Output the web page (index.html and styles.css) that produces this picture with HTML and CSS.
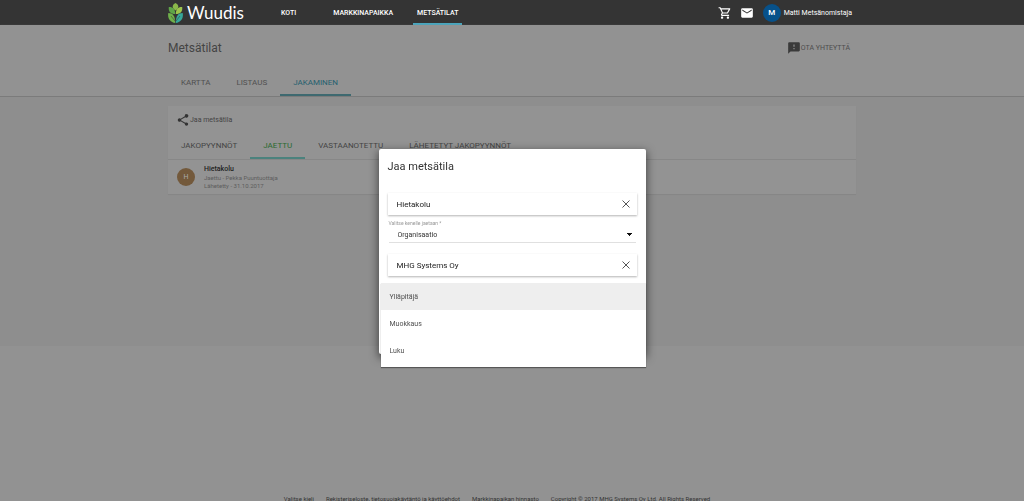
FILE: index.html
```html
<!DOCTYPE html>
<html lang="fi">
<head>
<meta charset="utf-8">
<meta name="viewport" content="width=device-width, initial-scale=1">
<title>Wuudis – Metsätilat</title>
<link rel="stylesheet" href="styles.css">
</head>
<body>
<div class="page">
  <header class="topbar">
    <div class="container topbar-row">
      <a class="brand" href="#">
        <svg class="brand-mark" viewBox="0 0 15 20" aria-hidden="true">
          <path d="M7.500 0C11 1.800 11.500 4.800 7.500 7.500C3.500 4.800 4 1.800 7.500 0Z" fill="#8bb84a"/>
          <path d="M.8 4C5 3.800 7.200 6 7.200 11C2.500 11 .2 8.500 .8 4Z" fill="#5fa548"/>
          <path d="M14.200 4C10 3.800 7.800 6 7.800 11C12.500 11 14.800 8.500 14.200 4Z" fill="#9dc54d"/>
          <path d="M.3 10C5 10 7.200 13 7.200 20C2 19.500-.7 15 .3 10Z" fill="#6fb04a"/>
          <path d="M14.700 10C10 10 7.800 13 7.800 20C13 19.500 15.700 15 14.700 10Z" fill="#36a79a"/>
          <path d="M3 13L7 18M12 13L8 18" stroke="#343434" stroke-width=".5" fill="none"/>
        </svg>
        <span>Wuudis</span>
      </a>
      <nav class="main-nav">
        <a href="#">KOTI</a>
        <a href="#">MARKKINAPAIKKA</a>
        <a class="current" href="#">METSÄTILAT</a>
      </nav>
      <div class="account">
        <button class="icon-button" aria-label="Ostoskori"><svg viewBox="0 0 24 24"><path d="M15.550 13c.75 0 1.410-.41 1.750-1.030l3.580-6.490A.996.996 0 0 0 20.010 4H5.210l-.94-2H1v2h2l3.600 7.590-1.350 2.440C4.520 15.370 5.480 17 7 17h12v-2H7l1.100-2h7.450zM6.160 6h12.150l-2.760 5H8.530L6.160 6zM7 18c-1.100 0-1.990.9-1.990 2S5.900 22 7 22s2-.9 2-2-.9-2-2-2zm10 0c-1.100 0-1.990.9-1.990 2s.89 2 1.990 2 2-.9 2-2-.9-2-2-2z"/></svg></button>
        <button class="icon-button mail" aria-label="Viestit"><svg viewBox="0 0 24 24"><path d="M20 4H4a2 2 0 0 0-2 2v12a2 2 0 0 0 2 2h16a2 2 0 0 0 2-2V6a2 2 0 0 0-2-2zm0 4l-8 5-8-5V6l8 5 8-5v2z"/></svg></button>
        <button class="user"><span class="avatar">M</span>Matti Metsänomistaja</button>
      </div>
    </div>
  </header>

  <div class="subheader">
    <div class="container">
      <div class="title-row">
        <h1>Metsätilat</h1>
        <button class="contact"><svg viewBox="0 0 24 24"><path d="M20 2H4c-1.100 0-1.990.9-1.990 2L2 22l4-4h14c1.100 0 2-.9 2-2V4c0-1.100-.9-2-2-2zm-7 12h-2v-2h2v2zm0-4h-2V6h2v4z"/></svg>OTA YHTEYTTÄ</button>
      </div>
      <nav class="tabs">
        <a href="#">KARTTA</a>
        <a href="#">LISTAUS</a>
        <a class="current" href="#">JAKAMINEN</a>
      </nav>
    </div>
  </div>

  <main class="content">
    <section class="container card">
      <button class="share"><svg viewBox="0 0 24 24"><path d="M18 16.080c-.76 0-1.440.3-1.960.77L8.910 12.700c.05-.23.09-.46.09-.7s-.04-.47-.09-.7l7.050-4.110A2.990 2.990 0 1 0 15 5c0 .24.04.47.09.7L8.040 9.810A2.990 2.990 0 1 0 8.040 14.190l7.120 4.160c-.05.21-.08.43-.08.65a2.920 2.920 0 1 0 2.920-2.920z"/></svg>Jaa metsätila</button>
      <nav class="tabs card-tabs">
        <a href="#">JAKOPYYNNÖT</a>
        <a class="current" href="#">JAETTU</a>
        <a href="#">VASTAANOTETTU</a>
        <a href="#">LÄHETETYT JAKOPYYNNÖT</a>
      </nav>
      <article class="share-item">
        <span class="item-avatar">H</span>
        <div>
          <h2>Hietakolu</h2>
          <p>Jaettu - Pekka Puuntuottaja</p>
          <p>Lähetetty - 31.10.2017</p>
        </div>
      </article>
    </section>
  </main>

  <footer class="footer">
    <a href="#">Valitse kieli</a>
    <a href="#">Rekisteriseloste, tietosuojakäytäntö ja käyttöehdot</a>
    <a href="#">Markkinapaikan hinnasto</a>
    <span>Copyright © 2017 MHG Systems Oy Ltd. All Rights Reserved</span>
  </footer>
</div>

<div class="overlay">
  <form class="dialog" role="dialog" aria-labelledby="dialog-title">
    <h2 id="dialog-title">Jaa metsätila</h2>
    <div class="search-box">
      <input type="text" value="Hietakolu" aria-label="Metsätila">
      <button type="button" aria-label="Tyhjennä metsätila"><svg viewBox="0 0 10 10"><path d="M1.500 1.500l7 7M8.500 1.500l-7 7"/></svg></button>
    </div>
    <div class="select-field">
      <label for="target">Valitse kenelle jaetaan *</label>
      <select id="target"><option>Organisaatio</option></select>
    </div>
    <div class="search-box">
      <input type="text" value="MHG Systems Oy" aria-label="Organisaatio">
      <button type="button" aria-label="Tyhjennä organisaatio"><svg viewBox="0 0 10 10"><path d="M1.500 1.500l7 7M8.500 1.500l-7 7"/></svg></button>
    </div>
    <div class="menu" role="listbox" aria-label="Oikeudet">
      <button type="button" class="active" role="option" aria-selected="true">Ylläpitäjä</button>
      <button type="button" role="option">Muokkaus</button>
      <button type="button" role="option">Luku</button>
    </div>
  </form>
</div>
</body>
</html>
```
FILE: styles.css
```css
* { box-sizing: border-box; }
body {
  margin: 0;
  font-family: Roboto, "Liberation Sans", sans-serif;
  font-size: 7px;
  color: #3d3d3d;
  background: #929292;
}
h1, h2, p { margin: 0; font-weight: 400; }
a { color: inherit; text-decoration: none; }
button, input, select { font: inherit; color: inherit; border: 0; padding: 0; background: none; }
svg { display: block; fill: currentColor; }

.page { height: 100vh; display: flex; flex-direction: column; overflow: hidden; }
.container { width: 100%; max-width: 688px; margin: 0 auto; }

.topbar { background: #343434; color: #fff; }
.topbar-row { height: 25px; display: flex; align-items: stretch; }
.brand { display: flex; align-items: center; gap: 4px; font-family: Lato, sans-serif; font-size: 17px; width: 109px; }
.brand-mark { width: 15px; height: 20px; }
.main-nav { display: flex; font-weight: 500; }
.main-nav a { display: flex; align-items: center; padding: 2px 4px 0; margin-right: 29px; border-bottom: 2px solid transparent; }
.main-nav a:nth-child(2) { margin-right: 16px; }
.main-nav .current { border-color: #4aa5bd; }
.account { display: flex; align-items: center; margin-left: auto; padding-right: 4px; }
.icon-button svg { width: 14px; height: 14px; }
.mail { margin: 0 9px 0 8px; }
.user { display: flex; align-items: center; gap: 3px; }
.avatar { width: 18px; height: 18px; border-radius: 50%; background: #07518a; display: grid; place-items: center; font-size: 8px; font-weight: 500; }

.subheader { border-bottom: 1px solid #7b7b7b; box-shadow: 0 1px 2px #858585; }
.title-row { height: 46px; display: flex; align-items: center; justify-content: space-between; }
h1 { font-size: 12px; color: #444; }
.contact { display: flex; align-items: center; padding-right: 6px; color: #4d4d4d; }
.contact svg { width: 14px; height: 14px; color: #3a3a3a; }
.tabs { display: flex; font-size: 8px; color: #505050; }
.tabs a { display: flex; align-items: center; height: 25px; padding: 0 13px; border-bottom: 2px solid transparent; }
.tabs .current { color: #25606f; border-color: #3e6970; }

.content { flex: 1; padding-top: 9px; background: linear-gradient(#8e8e8e 249px, #929292 249px); }
.card { background: #939393; box-shadow: 0 1px 1px #868686; }
.share { display: flex; align-items: center; height: 27px; padding-left: 8px; color: #444; }
.share svg { width: 14px; height: 14px; color: #333; }
.card-tabs { border-bottom: 1px solid #878787; color: #444; }
.card-tabs a { height: 26px; }
.card-tabs .current { color: #2a6a30; border-color: #4b827d; }
.share-item { display: flex; align-items: center; gap: 9px; height: 34px; padding-left: 9px; font-size: 6px; color: #5d5d5d; }
.share-item h2 { font-size: 7px; font-weight: 500; line-height: 9px; color: #222; }
.share-item p { line-height: 8px; }
.item-avatar { width: 18px; height: 18px; border-radius: 50%; background: #73593b; color: #aaa; display: grid; place-items: center; font-size: 7px; }

.footer { height: 6px; display: flex; justify-content: center; gap: 12px; padding-right: 30px; font-size: 6px; line-height: 8px; white-space: nowrap; color: #333; }

.overlay { position: fixed; inset: 0; display: flex; justify-content: center; align-items: center; padding-top: 2px; }
.dialog { position: relative; width: 267px; height: 205px; padding: 0 9px; background: #fff; border-radius: 2px; box-shadow: 0 3px 8px 1px rgba(0, 0, 0, .5); }
.dialog h2 { font-size: 11px; line-height: 36px; height: 44px; color: #333; }
.search-box { height: 22px; display: flex; align-items: center; padding: 0 6px 0 9px; box-shadow: 0 1px 2px rgba(0, 0, 0, .3); font-size: 8px; color: #222; }
.search-box input { flex: 1; min-width: 0; }
.search-box svg { width: 10px; height: 10px; fill: none; stroke: #555; stroke-width: 1; }
.select-field { padding: 5px 1px 0; height: 39px; }
.select-field label { display: block; font-size: 5px; line-height: 6px; color: #999; }
.select-field select { display: block; width: 100%; height: 17px; padding: 2px 9px 0; border-bottom: 1px solid #e0e0e0; border-radius: 0; appearance: none; font-size: 7px; color: #333; background: conic-gradient(from -45deg at 50% 100%, #111 90deg, transparent 0) right 4px top 7px / 6px 3px no-repeat; }
.menu { position: absolute; top: 134px; left: 2px; right: 0; padding-bottom: 3px; background: #fff; box-shadow: 0 1px 1px rgba(0, 0, 0, .4); }
.menu button { display: block; width: 100%; height: 27px; padding: 0 9px; text-align: left; font-size: 7px; color: #505050; }
.menu .active { background: #eee; }
```
